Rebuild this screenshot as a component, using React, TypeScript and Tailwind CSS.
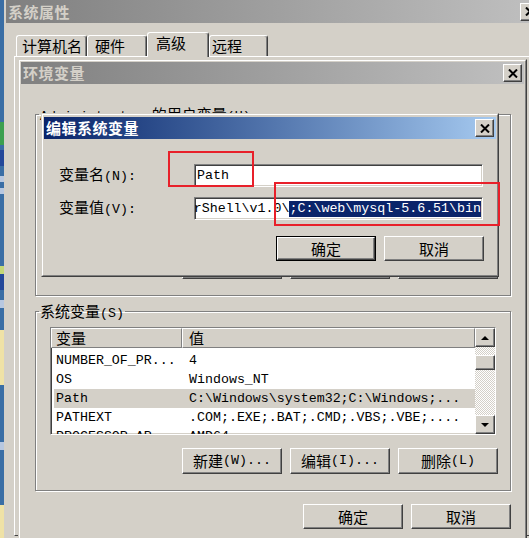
import React from 'react';

const cjk = "font-['Noto_Sans_CJK_SC',sans-serif] text-[15px]";
const mono = "font-['Liberation_Mono',monospace] text-[13.3px]";
const raised =
  'border border-t-white border-l-white border-r-[#404040] border-b-[#404040] shadow-[inset_-1px_-1px_0_#808080]';
const sunken =
  'border border-t-[#808080] border-l-[#808080] border-r-white border-b-white shadow-[inset_1px_1px_0_#404040,inset_-1px_-1px_0_#d4d0c8]';
const etched = 'border border-[#808080] shadow-[1px_1px_0_#ffffff,inset_1px_1px_0_#ffffff]';

// CJK runs in the CJK face, everything else in the fixed-width face
const Txt = ({ s }: { s: string }) => (
  <>
    {s
      .split(/([\u4e00-\u9fff]+)/)
      .filter(Boolean)
      .map((p, i) => (
        <span key={i} className={/[\u4e00-\u9fff]/.test(p) ? cjk : mono}>
          {p}
        </span>
      ))}
  </>
);

const CloseBtn = () => (
  <div className={`w-[19px] h-[18px] shrink-0 bg-[#d4d0c8] ${raised} flex items-center justify-center`}>
    <svg width="10" height="9" viewBox="0 0 10 9">
      <path d="M1 0.5 L9 8.5 M9 0.5 L1 8.5" stroke="#000" strokeWidth="2" />
    </svg>
  </div>
);

const TitleBar = ({ title, active, className = '' }: { title: string; active?: boolean; className?: string }) => (
  <div
    className={`h-[22px] shrink-0 flex items-center justify-between pl-[2px] pr-[2px] ${
      active
        ? 'bg-linear-to-r from-[#0a246a] to-[#a6caf0] text-white'
        : 'bg-linear-to-r from-[#808080] to-[#c0c0c0] text-[#d4d0c8]'
    } ${className}`}
  >
    <span className={`${cjk} font-bold tracking-[0.5px] leading-[16px]`}>{title}</span>
    <CloseBtn />
  </div>
);

const Btn = ({ label, def, h = 'h-[25px]' }: { label: string; def?: boolean; h?: string }) => (
  <div className={`w-[100px] ${h} ${def ? 'border border-black' : ''}`}>
    <div className={`h-full bg-[#d4d0c8] ${raised} flex items-center justify-center leading-[16px] text-black`}>
      <Txt s={label} />
    </div>
  </div>
);

const Tab = ({ label, w, pl, selected }: { label: string; w: string; pl: string; selected?: boolean }) => (
  <div
    className={`${w} ${pl} bg-[#d4d0c8] border-t border-l border-r border-t-white border-l-white border-r-[#404040] rounded-t-[3px] shadow-[inset_-1px_0_0_#808080] flex leading-[16px] ${
      selected ? 'h-[25px] -mb-[1px] relative z-10 items-start pt-[2px]' : 'h-[21px] items-center'
    }`}
  >
    <Txt s={label} />
  </div>
);

const GroupLabel = ({ s }: { s: string }) => (
  <legend className="ml-[3px] px-[1px] h-[14px] leading-[14px] whitespace-nowrap">
    <Txt s={s} />
  </legend>
);

const rows = [
  ['NUMBER_OF_PR...', '4'],
  ['OS', 'Windows_NT'],
  ['Path', 'C:\\Windows\\system32;C:\\Windows;...'],
  ['PATHEXT', '.COM;.EXE;.BAT;.CMD;.VBS;.VBE;....'],
  ['PROCESSOR_AR...', 'AMD64'],
];

const strip = [
  'h-[122px] bg-[#3a6ea5]',
  'h-[23px] bg-[#3ca050]',
  'h-[5px] bg-[#3a6ea5]',
  'h-[16px] bg-[#24489a]',
  'h-[10px] bg-[#3a6ea5]',
  'h-[6px] bg-[#b8c8e0]',
  'h-[6px] bg-[#3a6ea5]',
  'h-[6px] bg-[#b8c8e0]',
  'h-[72px] bg-[#3a6ea5]',
  'h-[8px] bg-[#c4d878]',
  'h-[16px] bg-[#24489a]',
  'h-[10px] bg-[#3a6ea5]',
  'h-[8px] bg-[#b8c8e0]',
  'h-[22px] bg-[#3a6ea5]',
  'h-[55px] bg-[#efe2a6]',
  'h-[57px] bg-[#3a6ea5]',
  'h-[8px] bg-[#b8c8e0]',
  'h-[55px] bg-[#3a6ea5]',
  'h-[33px] bg-[#efe2a6]',
];

const ArrowBtn = ({ down }: { down?: boolean }) => (
  <div className={`h-[19px] bg-[#d4d0c8] ${raised} flex items-center justify-center`}>
    <svg width="8" height="4" viewBox="0 0 8 4">
      <polygon points={down ? '0,0 8,0 4,4' : '0,4 8,4 4,0'} fill="#000" />
    </svg>
  </div>
);

export default function App() {
  return (
    <div className="relative w-[529px] h-[538px] overflow-hidden flex bg-[#3a6ea5] text-black">
      {/* desktop edge */}
      <div className="w-[4px] shrink-0 flex flex-col">
        {strip.map((c, i) => (
          <div key={i} className={`shrink-0 ${c}`} />
        ))}
      </div>

      {/* 系统属性 */}
      <div className="w-[540px] shrink-0 bg-[#d4d0c8] pl-[2px] flex flex-col">
        <TitleBar title="系统属性" className="h-[23px] w-[536px] pr-[3px]" />
        <div className="mt-[9px] ml-[8px] pl-[2px] h-[24px] flex items-end">
          <Tab label="计算机名" w="w-[71px]" pl="pl-[5px]" />
          <Tab label="硬件" w="w-[60px]" pl="pl-[7px]" />
          <Tab label="高级" w="w-[62px]" pl="pl-[8px]" selected />
          <Tab label="远程" w="w-[59px]" pl="pl-[2px]" />
        </div>
        <div className="ml-[8px] h-[480px] border-t border-l border-b border-t-white border-l-white border-b-[#404040]" />
      </div>

      {/* 环境变量 */}
      <div className="absolute left-[18px] top-[59px] w-[509px] h-[490px] bg-[#d4d0c8] border border-t-[#d4d0c8] border-l-[#d4d0c8] border-r-[#404040] border-b-[#404040]">
        <div className="h-full border border-t-white border-l-white border-r-[#808080] border-b-[#808080] p-[1px] flex flex-col">
          <TitleBar title="环境变量" />
          <div className="flex flex-col pl-[14px] pr-[13px] pt-[23px]">
            <fieldset className={`${etched} p-0`}>
              <GroupLabel s="Administrator 的用户变量(U)" />
              <div className="mt-[132px] pb-[16px] pr-[12px] flex justify-end gap-[8px]">
                <Btn label="新建(N)..." h="h-[26px]" />
                <Btn label="编辑(E)..." h="h-[26px]" />
                <Btn label="删除(D)" h="h-[26px]" />
              </div>
            </fieldset>

            <fieldset className={`${etched} p-0 mt-[8px]`}>
              <GroupLabel s="系统变量(S)" />
              <div className={`mt-[9px] ml-[14px] w-[446px] h-[108px] bg-white ${sunken} flex`}>
                <div className="flex-1 flex flex-col overflow-hidden">
                  <div className="h-[20px] shrink-0 flex">
                    <div className="w-[131px] bg-[#d4d0c8] border border-t-white border-l-white border-r-[#808080] border-b-[#808080] pl-[4px] flex items-center leading-[16px]">
                      <Txt s="变量" />
                    </div>
                    <div className="flex-1 bg-[#d4d0c8] border border-t-white border-l-white border-r-[#808080] border-b-[#808080] pl-[6px] flex items-center leading-[16px]">
                      <Txt s="值" />
                    </div>
                  </div>
                  <div className="mt-[3px] flex flex-col">
                    {rows.map(([k, v]) => (
                      <div key={k} className="h-[19px] shrink-0 flex">
                        <div
                          className={`ml-[3px] flex-1 flex items-center whitespace-nowrap ${mono} ${
                            k === 'Path' ? 'bg-[#d4d0c8]' : ''
                          }`}
                        >
                          <div className="w-[128px] pl-[2px]">{k}</div>
                          <div className="pl-[7px]">{v}</div>
                        </div>
                      </div>
                    ))}
                  </div>
                </div>
                <div className="w-[20px] shrink-0 flex flex-col">
                  <ArrowBtn />
                  <div className="flex-1 pt-[8px] bg-[image:repeating-conic-gradient(#ffffff_0_25%,#d4d0c8_0_50%)] bg-[length:2px_2px]">
                    <div className={`h-[15px] bg-[#d4d0c8] ${raised}`} />
                  </div>
                  <ArrowBtn down />
                </div>
              </div>
              <div className="mt-[13px] pb-[16px] pr-[12px] flex justify-end gap-[8px]">
                <Btn label="新建(W)..." h="h-[26px]" />
                <Btn label="编辑(I)..." h="h-[26px]" />
                <Btn label="删除(L)" h="h-[26px]" />
              </div>
            </fieldset>

            <div className="mt-[13px] flex justify-end gap-[8px]">
              <Btn label="确定" />
              <Btn label="取消" />
            </div>
          </div>
        </div>
      </div>

      {/* 编辑系统变量 */}
      <div className="absolute left-[41px] top-[113px] w-[458px] h-[164px] bg-[#d4d0c8] border border-t-[#d4d0c8] border-l-[#d4d0c8] border-r-[#404040] border-b-[#404040]">
        <div className="h-full border border-t-white border-l-white border-r-[#808080] border-b-[#808080] px-[1px] pt-[2px] flex flex-col">
          <TitleBar title="编辑系统变量" active />
          <div className="pt-[25px] pl-[15px] pr-[12px] flex flex-col">
            <div className="h-[23px] flex items-center">
              <div className="w-[135px] leading-[16px] whitespace-nowrap">
                <Txt s="变量名(N):" />
              </div>
              <div className={`w-[289px] h-[23px] bg-white ${sunken} pl-[2px] flex items-center leading-[16px] ${mono}`}>
                Path
              </div>
            </div>
            <div className="mt-[10px] h-[23px] flex items-center">
              <div className="w-[135px] leading-[16px] whitespace-nowrap">
                <Txt s="变量值(V):" />
              </div>
              <div
                className={`w-[289px] h-[23px] bg-white ${sunken} pr-[1px] flex items-center justify-end overflow-hidden whitespace-nowrap leading-[16px] ${mono}`}
              >
                <span className="shrink-0">
                  %SystemRoot%\system32;%SystemRoot%;%SystemRoot%\System32\Wbem;%SYSTEMROOT%\System32\WindowsPowerShell\v1.0\
                </span>
                <span className="shrink-0 bg-[#0a246a] text-white">;C:\web\mysql-5.6.51\bin</span>
              </div>
            </div>
            <div className="mt-[16px] flex justify-end gap-[8px]">
              <Btn label="确定" def />
              <Btn label="取消" />
            </div>
          </div>
        </div>
      </div>

      {/* annotation boxes */}
      <div className="absolute left-[168px] top-[151px] w-[86px] h-[36px] border-2 border-[#e8202a]" />
      <div className="absolute left-[274px] top-[182px] w-[226px] h-[44px] border-2 border-[#e8202a]" />
    </div>
  );
}
